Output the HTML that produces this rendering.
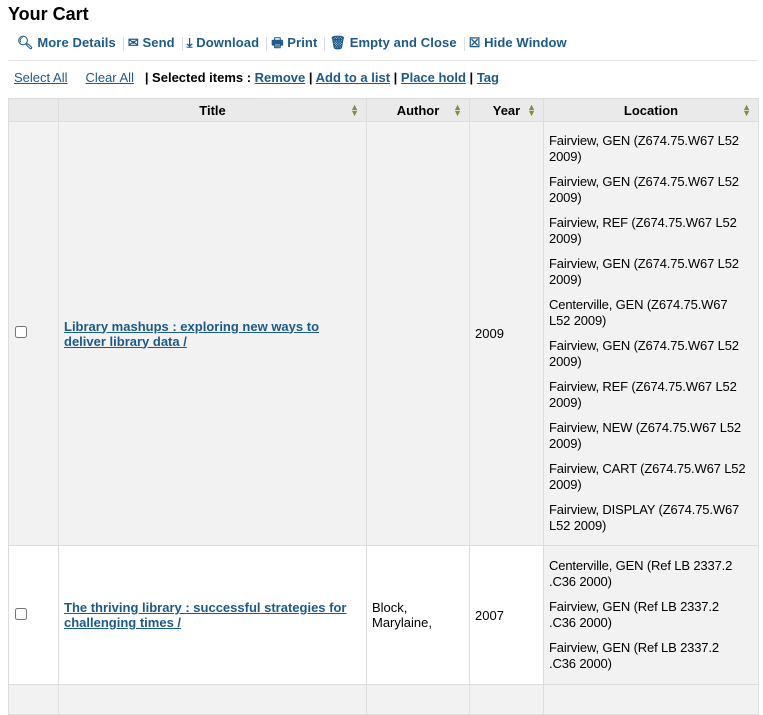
<!DOCTYPE html>
<html><head><style>
body{margin:0;background:#fff;font-family:"Liberation Sans",Arial,sans-serif;font-size:13px;color:#000;width:763px;height:688px;overflow:hidden;position:relative}
h1{position:absolute;left:8px;top:4px;margin:0;font-size:18px;font-weight:bold}
.tb{position:absolute;left:17px;top:34px;font-weight:bold;color:#1c5a8c;font-size:13px;white-space:nowrap;letter-spacing:0.1px}
.tb span{margin-right:4px}
.sep{display:inline-block;width:1px;height:14px;background:#ddd;vertical-align:middle;margin:0 6px 0 3px}
.hr{position:absolute;left:8px;top:60px;width:750px;height:1px;background:#e4e4e4}
.sel{position:absolute;left:14px;top:70px;white-space:nowrap}
a{color:#1c5a8c}
table{position:absolute;left:8px;top:98px;border-collapse:collapse;width:751px;table-layout:fixed}
td,th{border:1px solid #ddd;padding:0 5px;vertical-align:middle;font-size:13px;overflow:hidden}
th{background:#eaeaea;height:22px;font-weight:bold;position:relative;text-align:center}
th i{position:absolute;right:7px;top:5px;color:#8a8a3a;font-style:normal;font-size:9px;line-height:6px}
.g td{background:#f2f2f2}
td.loc{background:#f2f2f2;padding:0 4px 0 5px;letter-spacing:-0.15px;white-space:nowrap}
.loc p{margin:0 0 9px;line-height:16px}
.loc p:last-child{margin:0}
td a{font-weight:bold}
input{margin:0 0 0 1px;width:12px;height:12px}
</style></head><body>
<h1>Your Cart</h1>
<div class="tb"><span>🔍︎ More Details</span><span class="sep"></span><span>✉ Send</span><span class="sep"></span><span>⤓ Download</span><span class="sep"></span><span>🖶 Print</span><span class="sep"></span><span>🗑︎ Empty and Close</span><span class="sep"></span><span>☒ Hide Window</span></div>
<div class="hr"></div>
<div class="sel"><a href="#">Select All</a> &nbsp;&nbsp;&nbsp; <a href="#">Clear All</a> &nbsp; <b>| Selected items : <a href="#">Remove</a> | <a href="#">Add to a list</a> | <a href="#">Place hold</a> | <a href="#">Tag</a></b></div>
<table>
<colgroup><col style="width:50px"><col style="width:308px"><col style="width:103px"><col style="width:74px"><col></colgroup>
<tr><th></th><th>Title<i>▲<br>▼</i></th><th>Author<i>▲<br>▼</i></th><th>Year<i>▲<br>▼</i></th><th>Location<i>▲<br>▼</i></th></tr>
<tr class="g" style="height:424px"><td><input type="checkbox"></td><td><a href="#">Library mashups : exploring new ways to deliver library data /</a></td><td></td><td>2009</td><td class="loc">
<p>Fairview, GEN (Z674.75.W67 L52<br>2009)</p><p>Fairview, GEN (Z674.75.W67 L52<br>2009)</p><p>Fairview, REF (Z674.75.W67 L52<br>2009)</p><p>Fairview, GEN (Z674.75.W67 L52<br>2009)</p><p>Centerville, GEN (Z674.75.W67<br>L52 2009)</p><p>Fairview, GEN (Z674.75.W67 L52<br>2009)</p><p>Fairview, REF (Z674.75.W67 L52<br>2009)</p><p>Fairview, NEW (Z674.75.W67 L52<br>2009)</p><p>Fairview, CART (Z674.75.W67 L52<br>2009)</p><p>Fairview, DISPLAY (Z674.75.W67<br>L52 2009)</p></td></tr>
<tr style="height:139px"><td><input type="checkbox"></td><td><a href="#">The thriving library : successful strategies for challenging times /</a></td><td>Block,<br>Marylaine,</td><td>2007</td><td class="loc"><p>Centerville, GEN (Ref LB 2337.2<br>.C36 2000)</p><p>Fairview, GEN (Ref LB 2337.2<br>.C36 2000)</p><p>Fairview, GEN (Ref LB 2337.2<br>.C36 2000)</p></td></tr>
<tr class="g" style="height:30px"><td></td><td></td><td></td><td></td><td></td></tr>
</table>
</body></html>
